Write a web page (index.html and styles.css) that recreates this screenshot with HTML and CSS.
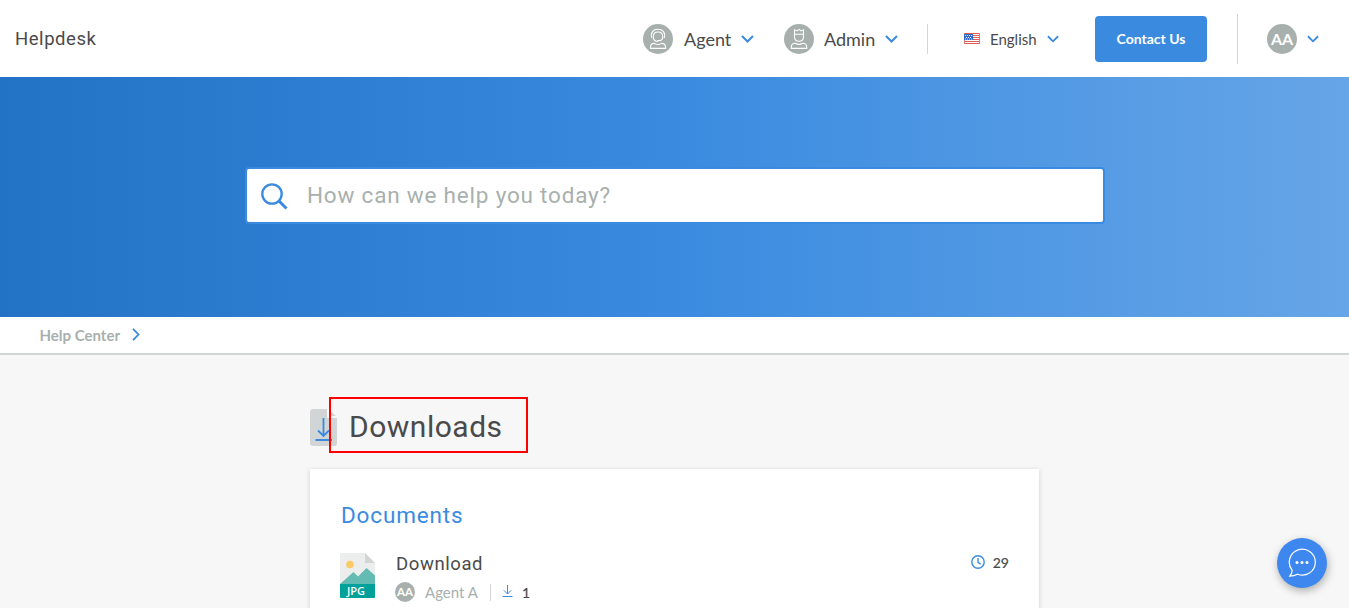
FILE: index.html
```html
<!DOCTYPE html>
<html lang="en">
<head>
<meta charset="utf-8">
<title>Helpdesk</title>
<link rel="stylesheet" href="styles.css">
</head>
<body>
<header class="header">
  <div class="brand">Helpdesk</div>
  <nav class="nav">
    <div class="role">
      <svg class="role-icon" viewBox="0 0 30 30" fill="none" stroke="#fff" stroke-width="1.1"><circle cx="15" cy="15" r="15" fill="#a8b0ae" stroke="none"/><path d="M8.800 14C7.200 8.500 10.300 5.300 15 5.300s7.800 3.200 6.200 8.700M15 17.400c-2.800 0-4.700-2-4.700-4.700S12.200 8 15 8s4.700 2 4.700 4.700c0 2.500-1.200 3.700-3 3.900h-2.400" /><path d="M7.500 24.400v-1.200c0-2.400 1.500-3.800 3.800-3.800 2.400 1.500 5 1.500 7.400 0 2.300 0 3.800 1.400 3.800 3.800v1.200z"/></svg>
      <span class="role-name agent">Agent</span>
      <svg class="chevron" viewBox="0 0 13 8"><path d="M1 1l5.500 5.500L12 1"/></svg>
    </div>
    <div class="role">
      <svg class="role-icon" viewBox="0 0 30 30" fill="none" stroke="#fff" stroke-width="1.100"><circle cx="15" cy="15" r="15" fill="#a8b0ae" stroke="none"/><path d="M10.500 10V5.800l2.400 1.100L15 5.400l2.100 1.500 2.400-1.100V13c0 2.500-2 4.200-4.500 4.200S10.500 15.500 10.500 13z"/><path d="M10.500 10.300h9M7.300 24.400v-1.200c0-2.400 1.500-4 4-4 2.400 1.500 5 1.500 7.400 0 2.500 0 4 1.600 4 4v1.200z"/></svg>
      <span class="role-name admin">Admin</span>
      <svg class="chevron" viewBox="0 0 13 8"><path d="M1 1l5.500 5.500L12 1"/></svg>
    </div>
    <div class="divider short"></div>
    <div class="language">
      <svg class="flag" viewBox="0 0 16 12"><path fill="#fff" d="M0 0h16v12H0z"/><path stroke="#e05a53" d="M0 .5h16M0 2.500h16M0 4.500h16M0 6.500h16M0 8.500h16M0 10.500h16"/><path d="M.5 0v11M15.500 0v11" stroke="#d97972"/><path fill="#3369cb" d="M0 1h9v6H0z"/><path stroke="#dce9ff" stroke-dasharray="1 1" d="M1 2.500h7M2 4.500h6M1 6h7"/></svg>
      <span class="language-name">English</span>
      <svg class="chevron small" viewBox="0 0 13 8"><path d="M1 1l5.500 5.500L12 1"/></svg>
    </div>
    <button class="contact">Contact Us</button>
    <div class="divider tall"></div>
    <div class="avatar">AA</div>
    <svg class="chevron small account" viewBox="0 0 13 8"><path d="M1 1l5.500 5.500L12 1"/></svg>
  </nav>
</header>
<section class="hero">
  <div class="search">
    <svg class="search-icon" viewBox="0 0 27 27"><circle cx="11" cy="11" r="9.700"/><path d="M18 18l7.500 7.500" stroke-width="3"/></svg>
    <span class="search-text">How can we help you today?</span>
  </div>
</section>
<div class="breadcrumb">
  <span class="crumb">Help Center</span>
  <svg class="crumb-arrow" viewBox="0 0 8 13"><path d="M1 .8l5.500 5.700L1 12.200"/></svg>
</div>
<main class="content">
  <div class="title-row">
    <svg class="title-icon" viewBox="0 0 28 38"><path fill="#d1d5d5" d="M3 0h14v9h10v25a3 3 0 0 1-3 3H3a3 3 0 0 1-3-3V3a3 3 0 0 1 3-3z"/><path fill="#d1d5d5" d="M19 1l7 6h-7z"/><path fill="none" stroke="#3a8be0" stroke-width="1.800" d="M13.500 9v17M8 21.500l5.500 5.500 5.500-5.500M5.500 31h16.500"/></svg>
    <div class="title-highlight"><h1 class="title">Downloads</h1></div>
  </div>
  <section class="card">
    <h2 class="card-title">Documents</h2>
    <div class="document">
      <svg class="file-icon" viewBox="0 0 35 45"><path fill="#eceeed" d="M1 0h24l10 10v22H0V1a1 1 0 0 1 1-1z"/><path fill="#d1d5d5" d="M25 0l10 10H25z"/><circle cx="10" cy="11.500" r="3.800" fill="#fbc965"/><path fill="#63bbb3" d="M0 31L13.500 19l4.500 4.500 8.500-8.500L35 22.500V32H0z"/><path fill="#00a19a" d="M0 31h35v13a1 1 0 0 1-1 1H1a1 1 0 0 1-1-1z"/><text class="file-type" x="7" y="42">JPG</text></svg>
      <div class="document-info">
        <div class="document-name">Download</div>
        <div class="meta">
          <div class="avatar mini">AA</div>
          <span class="author">Agent A</span>
          <span class="meta-divider"></span>
          <svg class="download-icon" viewBox="0 0 11 13"><path d="M5.500 0v8.500M1.800 5.300l3.700 3.700 3.700-3.700M.5 11.500h10"/></svg>
          <span class="count">1</span>
        </div>
      </div>
      <div class="date">
        <svg class="clock" viewBox="0 0 14 14"><circle cx="7" cy="7" r="6.200"/><path d="M7 3v4.300l2.600 2"/></svg>
        <span>29</span>
      </div>
    </div>
  </section>
</main>
<div class="chat">
  <svg class="chat-icon" viewBox="0 0 28 29"><path fill="none" stroke="#fff" stroke-width="1.200" d="M4.200 22.300A13 13 0 1 1 9.500 26.200Q6 28 1.800 28.200Q4 25.600 4.200 22.300z"/><circle cx="9" cy="14.500" r="1.500"/><circle cx="14" cy="14.500" r="1.500"/><circle cx="19" cy="14.500" r="1.500"/></svg>
</div>
</body>
</html>
```
FILE: styles.css
```css
* { box-sizing: border-box; }
body {
  margin: 0;
  height: 608px;
  overflow: hidden;
  background: #f7f7f7;
  color: #4a4a4a;
  font-family: Lato, sans-serif;
}
svg { display: block; flex: none; }
.header {
  display: flex;
  align-items: center;
  justify-content: space-between;
  height: 77px;
  padding: 0 30px 0 15px;
  background: #fff;
}
.brand { font: 18.500px/24px Roboto, sans-serif; letter-spacing: .55px; }
.nav { display: flex; align-items: center; height: 78px; align-self: flex-start; }
.role { display: flex; align-items: center; margin-right: 29px; }
.role-icon { width: 30px; height: 30px; }
.role-name { font-size: 18px; line-height: 24px; white-space: nowrap; margin-left: 11px; }
.agent { width: 57px; }
.admin { width: 61px; margin-left: 10px; }
.role + .role { margin-left: 1px; }
.chevron { width: 13px; height: 8px; fill: none; stroke: #3a8be0; stroke-width: 2; }
.chevron.small { width: 12px; }
.divider { width: 1px; background: #d1d5d5; }
.short { height: 30px; }
.tall { height: 50px; margin: 0 29px 0 30px; }
.language { display: flex; align-items: center; margin-left: 36px; }
.flag { width: 16px; height: 12px; }
.language-name { width: 57px; margin-left: 10px; font-size: 15px; white-space: nowrap; }
.contact {
  width: 112px;
  height: 46px;
  margin-left: 36px;
  padding: 0 0 2px;
  border: 0;
  border-radius: 4px;
  background: #3a8be0;
  color: #fff;
  font: bold 14px Lato, sans-serif;
}
.avatar {
  display: flex;
  align-items: center;
  justify-content: center;
  flex: none;
  width: 30px;
  height: 30px;
  padding-bottom: 2px;
  border-radius: 50%;
  background: #a8b0ae;
  color: #fff;
  font: bold 16px Lato, sans-serif;
}
.account { margin-left: 10px; }
.hero {
  height: 240px;
  padding: 90px 244px 0 245px;
  background: linear-gradient(90deg, #2273c5 0%, #3a8be0 50%, #66a5e7 100%);
}
.search {
  display: flex;
  align-items: center;
  height: 57px;
  border: 2px solid #3a8be0;
  border-radius: 4px;
  background: #fff;
  padding-left: 14px;
}
.search-icon { width: 27px; height: 27px; margin-top: 2px; fill: none; stroke: #3a8be0; stroke-width: 2.300; }
.search-text { margin: 0 0 2px 19px; color: #a8b0ae; font: 22.500px/30px Roboto, sans-serif; letter-spacing: .8px; }
.breadcrumb {
  display: flex;
  align-items: center;
  height: 38px;
  padding-left: 39.500px;
  border-bottom: 2px solid #d1d5d5;
  background: #fff;
}
.crumb { width: 92px; color: #a8b0ae; font-size: 15px; font-weight: bold; white-space: nowrap; }
.crumb-arrow { width: 8px; height: 13px; margin-top: -1px; fill: none; stroke: #3a8be0; stroke-width: 1.800; }
.content { width: 729px; margin: 42px 0 0 310px; }
.title-row { display: flex; height: 56px; }
.title-icon { width: 28px; height: 38px; margin-top: 12px; }
.title-highlight { width: 199px; height: 56px; margin-left: -9px; border: 2px solid #fe0000; z-index: 1; }
.title { margin: 11px 0 0 18px; font: 30px/34px Roboto, sans-serif; letter-spacing: .5px; }
.card {
  height: 160px;
  margin-top: 16px;
  padding: 30px;
  background: #fff;
  box-shadow: 0 1px 5px rgba(0, 0, 0, .16);
}
.card-title { margin: 0 0 0 1px; color: #3a8be0; font: 22.500px/32px Roboto, sans-serif; letter-spacing: .85px; }
.document { display: flex; margin-top: 21px; }
.file-icon { width: 35px; height: 45px; margin-top: 1px; }
.file-type { fill: #fff; font: 600 11px "Open Sans", sans-serif; }
.document-info { margin-left: 21px; }
.document-name { font: 18.500px/24px Roboto, sans-serif; letter-spacing: .6px; }
.meta { display: flex; align-items: center; height: 20px; margin: 6px 0 0 -1px; }
.mini { width: 20px; height: 20px; padding-bottom: 1px; font-size: 11.500px; }
.author { width: 65px; margin-left: 10px; color: #a8b0ae; font-size: 15px; }
.meta-divider { width: 1px; height: 17px; background: #d1d5d5; }
.download-icon { width: 11px; height: 13px; margin: -2px 0 0 11px; fill: none; stroke: #3a8be0; }
.count { margin-left: 9px; font-size: 14px; -webkit-text-stroke: .2px #4a4a4a; }
.date { display: flex; align-items: center; height: 20px; margin-left: auto; font-size: 14px; -webkit-text-stroke: .2px #4a4a4a; }
.clock { width: 14px; height: 14px; margin-right: 8px; fill: none; stroke: #3a8be0; stroke-width: 1.400; }
.chat {
  position: fixed;
  right: 22px;
  bottom: 20px;
  display: flex;
  align-items: center;
  justify-content: center;
  width: 50px;
  height: 50px;
  padding: 0 1px 2px 0;
  border-radius: 50%;
  background: #3d87ef;
  box-shadow: 1px 3px 8px rgba(0, 0, 0, .3);
}
.chat-icon { width: 28px; height: 29px; fill: #fff; }
```
